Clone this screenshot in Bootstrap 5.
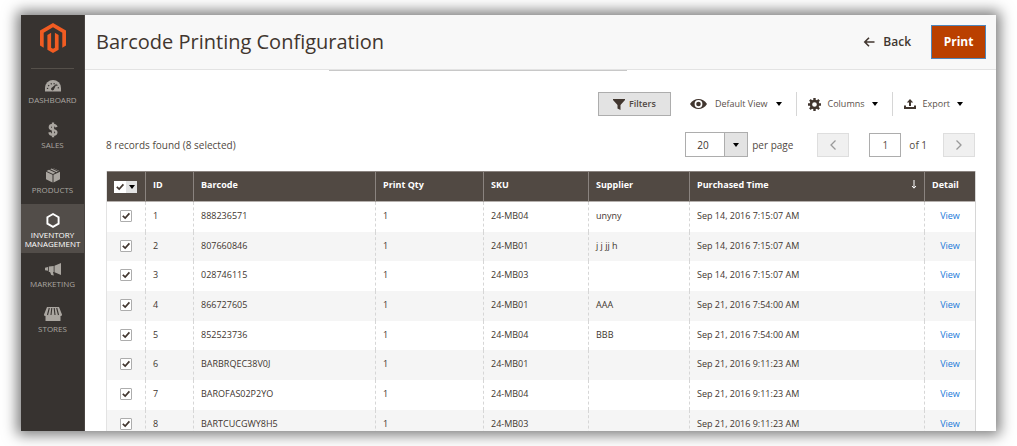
<!DOCTYPE html>
<html lang="en">
<head>
<meta charset="utf-8">
<meta name="viewport" content="width=device-width, initial-scale=1">
<title>Barcode Printing Configuration</title>
<link href="https://cdn.jsdelivr.net/npm/bootstrap@5.3.0/dist/css/bootstrap.min.css" rel="stylesheet">
<style>
body{font-family:"Open Sans",sans-serif;font-size:10px;line-height:16px;color:#514943;background:#fff}
.stage{padding:15px 21px}
.shell{box-shadow:0 0 13px 4px rgba(0,0,0,.52);background:#fff}
.side{width:64px;background:#373330;border-right:1px solid #4a4542}
.logo{padding:8px 0 15px;margin:0 10px;border-bottom:1px solid #55504a}
.side .nav-item a{display:block;height:45px;padding-top:8px;color:#aaa6a0;font-size:8px;line-height:9px;text-transform:uppercase;text-decoration:none;text-align:center}
.side .nav-item svg{display:block;margin:0 auto 2px}
.side .nav-item a.active{height:49px;background:#524d49;color:#fff}
.titlebar{height:55px;background:#f8f8f8;border-bottom:1px solid #e3e3e3;padding:0 10px 0 11px}
.titlebar h1{font-size:20px;line-height:28px;font-weight:400;color:#41362f}
.act{font-size:12px;font-weight:600;border-radius:0;line-height:16px;color:#41362f;border:0}
.act-print{background:#ba4000;color:#fff;border:1px solid #4f86bb;width:55px;height:34px;padding:0;font-weight:700}
.act-print:hover{background:#a83900;color:#fff}
.field-edge{width:298px;margin-left:244px;border-top:1px solid #c8c8c8}
.pane{padding:21px 21px 0}
.tool{background:none;border:0;border-radius:0;height:24px;padding:0 14px 0 11px;gap:7px;font-size:9px;line-height:16px;color:#5a504a}
.tool.view{gap:8px}
.tool:last-child{padding-right:12px}
.tool+.tool{border-left:1px solid #d6d6d6}
.tool.filt{background:#e3e3e3;border:1px solid #adadad;width:73px;padding:0;gap:4px;font-weight:600;color:#514943}
.caret{width:0;height:0;border:3px solid transparent;border-top:4px solid #000;border-bottom:0}
.pager{height:24px;border:1px solid #dedede;background:#f0f0f0;width:32px;border-radius:0;padding:0}
.pagebox{width:32px;height:24px;margin-left:20px;border:1px solid #adadad;border-radius:0;text-align:center;color:#5a504a;font-size:10px;padding:0}
.size{width:63px;height:25px;border:1px solid #adadad;border-radius:0;appearance:none;color:#41362f;padding:0 0 0 11px;font-size:10px;
 background:url("data:image/svg+xml,%3Csvg xmlns='http://www.w3.org/2000/svg' width='23' height='23'%3E%3Cpath fill='%23e3e3e3' d='M0 0h23v23H0z'/%3E%3Cpath fill='%23adadad' d='M0 0h1v23H0z'/%3E%3Cpath d='M9 10h6l-3 4z'/%3E%3C/svg%3E") right center no-repeat #fff}
.grid{table-layout:fixed;border-collapse:separate;border-spacing:0;width:100%;margin-top:14px;border-right:1px solid #d6d6d6;border-left:1px solid #e3e3e3;font-size:9px;line-height:14px}
.grid th{height:31px;background:#514943;color:#fff;font-weight:700;padding:0 7px 3px;border-top:1px solid #8a837f;border-bottom:1px solid #b5b0ad}
.grid th:first-child{padding-bottom:0}
.grid th+th{border-left:1px solid #8a837f}
.grid td{height:30px;padding:0 7px 2px;color:#41362f}
.grid tr:nth-child(3n+2) td{height:29px}
.grid td+td{border-left:1px dashed #d6d6d6}
.grid tbody tr:nth-child(even) td{background:#f5f5f5}
.grid td a{color:#1979d9;text-decoration:none}
.c-check{width:38px}.c-id{width:48px}.c-code{width:182px}.c-qty{width:108px}.c-sku{width:105px}.c-sup{width:101px}.c-time{width:235px}.c-det{width:51px}
.tick{appearance:none;display:block;width:12px;height:12px;margin:0 auto;border:1px solid #adadad;border-radius:1px;
 background:url("data:image/svg+xml,%3Csvg xmlns='http://www.w3.org/2000/svg' viewBox='0 0 10 10'%3E%3Cpath fill='none' stroke='%2341362f' stroke-width='1.7' d='M1.8 4.8l2.4 2.3 4.2-4.7'/%3E%3C/svg%3E") center/10px no-repeat #fff}
th .tick{margin:0;border-color:#fff;border-radius:0}
.more{width:11px;height:12px;background:#e3e3e3;border:0;padding:0}
</style>
</head>
<body>
<div class="stage vh-100 overflow-hidden">
<div class="shell d-flex h-100">
<nav class="side flex-shrink-0" aria-label="Main">
  <div class="logo text-center">
    <svg class="d-block mx-auto" width="26" height="30" viewBox="0 0 26 30" fill="#f15c22"><path d="M13 0l13 7.5v15l-3.7 2.2v-15L13 4.3 3.7 9.7v15L0 22.500v-15z"/><path d="M14.900 24.700L13 25.800l-1.900-1.100v-15l-3.700 2.200v14.900L13 30l5.600-3.200V11.900l-3.700-2.200z"/></svg>
  </div>
  <ul class="nav flex-column flex-nowrap">
    <li class="nav-item"><a href="#"><svg width="18" height="16" viewBox="0 0 18 16"><path fill="currentColor" d="M1 14.500V11a8 8 0 0 1 16 0v3.500z"/><path stroke="#373330" stroke-width="1.300" stroke-dasharray="1.200 1.800" fill="none" d="M3.500 12a5.500 5.500 0 0 1 11 0"/><path fill="#373330" d="M12.800 6.500L10 12.200a1.500 1.500 0 1 1-2-1.700z"/></svg>Dashboard</a></li>
    <li class="nav-item"><a href="#"><svg width="18" height="16" viewBox="0 0 18 16"><path fill="none" stroke="currentColor" stroke-width="2.300" d="M12.500 5.200C12 3.600 10.800 3 9 3 7 3 5.800 3.900 5.800 5.300c0 3.200 6.600 1.700 6.600 5 0 1.600-1.300 2.500-3.400 2.500-2 0-3.300-.8-3.600-2.600M9 .6v14.600"/></svg>Sales</a></li>
    <li class="nav-item"><a href="#"><svg width="18" height="16" viewBox="0 0 18 16" fill="currentColor"><path d="M2 4.800l6.500 3V15.500L2 12.200zM16 4.800l-6.500 3V15.500l6.500-3.300zM2.500 4L5 2.800l6.400 3L9 7zM6.200 2.300L7.500 1.600l6.400 3-1.400.7zM8.700 1.100L9 1l6.500 3-.6.300z"/></svg>Products</a></li>
    <li class="nav-item"><a class="active" href="#"><svg width="18" height="16" viewBox="0 0 18 16"><path fill="none" stroke="currentColor" stroke-width="1.900" d="M9 2l5.600 3.200v6.400L9 14.800l-5.600-3.200V5.200z"/></svg>Inventory Management</a></li>
    <li class="nav-item"><a href="#"><svg width="18" height="16" viewBox="0 0 18 16" fill="currentColor"><path d="M17 2v12l-6.500-2.800V4.800zM9.700 5v6H9l.8 3.600-2.500-.5L6 11H4.800V5.500zM1 6.800L4 6v3.800L1 9.200z"/></svg>Marketing</a></li>
    <li class="nav-item"><a href="#"><svg width="18" height="16" viewBox="0 0 18 16"><path fill="currentColor" d="M3 1h12l3 7.500c0 1-.7 1.500-1.500 1.500v5h-15v-5C.7 10 0 9.500 0 8.500z"/><path stroke="#373330" stroke-width="1.100" fill="none" d="M5.300 2L3.500 9M7.800 2L7 9M10.200 2l.8 7M12.700 2l1.800 7"/></svg>Stores</a></li>
  </ul>
</nav>
<main class="flex-grow-1 overflow-hidden">
  <header class="titlebar d-flex align-items-center justify-content-between">
    <h1 class="m-0">Barcode Printing Configuration</h1>
    <div class="d-flex align-items-center">
      <button type="button" class="btn act d-flex align-items-center gap-2 p-0 me-3"><svg width="12" height="12" viewBox="0 0 12 12" fill="none" stroke="currentColor" stroke-width="1.600"><path d="M11.500 6H2M6 1.800L1.800 6 6 10.200"/></svg>Back</button>
      <button type="button" class="btn act act-print ms-1">Print</button>
    </div>
  </header>
  <div class="field-edge"></div>
  <div class="pane">
    <div class="d-flex justify-content-end">
      <button type="button" class="btn tool filt d-flex align-items-center justify-content-center me-2"><svg width="12" height="11" viewBox="0 0 12 11" fill="#41362f"><path d="M0 0h12v1L7.500 6v5l-3-1.500V6L0 1z"/></svg>Filters</button>
      <button type="button" class="btn tool view border-0 d-flex align-items-center"><svg width="17" height="12" viewBox="0 0 17 12"><path fill="#41362f" fill-rule="evenodd" d="M0 6C4-.8 13-.8 17 6 13 12.800 4 12.800 0 6zm8.500-3.900a3.900 3.900 0 1 0 0 7.800 3.900 3.900 0 0 0 0-7.800z"/><circle cx="8.500" cy="6" r="2.300" fill="#41362f"/></svg>Default View<span class="caret"></span></button>
      <button type="button" class="btn tool d-flex align-items-center"><svg width="13" height="13" viewBox="0 0 13 13" fill="none" stroke="#41362f"><circle cx="6.500" cy="6.500" r="3.600" stroke-width="2.500"/><path stroke-width="2.400" d="M6.500 0v2.500M6.500 10.500V13M0 6.500h2.500M10.500 6.500H13M1.900 1.900l1.800 1.800M9.300 9.300l1.800 1.800M1.900 11.100l1.800-1.800M9.300 3.700l1.800-1.800"/></svg>Columns<span class="caret"></span></button>
      <button type="button" class="btn tool d-flex align-items-center"><svg width="12" height="12" viewBox="0 0 12 12" fill="#41362f"><path d="M6 1l3.200 3.500H7V8H5V4.500H2.800zM0 7.500h2V9h8V7.500h2V11H0z"/></svg>Export<span class="caret"></span></button>
    </div>
    <div class="d-flex align-items-center mt-3">
      <span class="me-auto">8 records found (8 selected)</span>
      <select class="size" id="per"><option>20</option></select>
      <label class="ms-1" for="per">per page</label>
      <button type="button" class="btn pager d-flex align-items-center justify-content-center ms-4" aria-label="Previous page"><svg width="8" height="10" viewBox="0 0 8 10" fill="none" stroke="#999" stroke-width="1.300"><path d="M6.500.5L2 5l4.500 4.500"/></svg></button>
      <input class="pagebox" id="page" value="1" aria-label="Page">
      <label class="ms-2" for="page">of 1</label>
      <button type="button" class="btn pager d-flex align-items-center justify-content-center ms-3" aria-label="Next page"><svg width="8" height="10" viewBox="0 0 8 10" fill="none" stroke="#999" stroke-width="1.300"><path d="M1.500.5L6 5 1.500 9.500"/></svg></button>
    </div>
    <table class="grid">
      <colgroup><col class="c-check"><col class="c-id"><col class="c-code"><col class="c-qty"><col class="c-sku"><col class="c-sup"><col class="c-time"><col class="c-det"></colgroup>
      <thead><tr><th><div class="d-flex"><input type="checkbox" class="tick" checked aria-label="Select all"><button type="button" class="more d-flex align-items-center justify-content-center" aria-label="Selection options"><span class="caret"></span></button></div></th><th>ID</th><th>Barcode</th><th>Print Qty</th><th>SKU</th><th>Supplier</th><th><div class="d-flex justify-content-between">Purchased Time<svg width="6" height="12" viewBox="0 0 6 12" fill="none" stroke="#fff"><path d="M3 2v8M1 8l2 2.200L5 8"/></svg></div></th><th>Detail</th></tr></thead>
      <tbody>
        <tr><td><input type="checkbox" class="tick" checked aria-label="Row 1"></td><td>1</td><td>888236571</td><td>1</td><td>24-MB04</td><td>unyny</td><td>Sep 14, 2016 7:15:07 AM</td><td class="text-center"><a href="#">View</a></td></tr>
        <tr><td><input type="checkbox" class="tick" checked aria-label="Row 2"></td><td>2</td><td>807660846</td><td>1</td><td>24-MB01</td><td>j j jj h</td><td>Sep 14, 2016 7:15:07 AM</td><td class="text-center"><a href="#">View</a></td></tr>
        <tr><td><input type="checkbox" class="tick" checked aria-label="Row 3"></td><td>3</td><td>028746115</td><td>1</td><td>24-MB03</td><td></td><td>Sep 14, 2016 7:15:07 AM</td><td class="text-center"><a href="#">View</a></td></tr>
        <tr><td><input type="checkbox" class="tick" checked aria-label="Row 4"></td><td>4</td><td>866727605</td><td>1</td><td>24-MB01</td><td>AAA</td><td>Sep 21, 2016 7:54:00 AM</td><td class="text-center"><a href="#">View</a></td></tr>
        <tr><td><input type="checkbox" class="tick" checked aria-label="Row 5"></td><td>5</td><td>852523736</td><td>1</td><td>24-MB04</td><td>BBB</td><td>Sep 21, 2016 7:54:00 AM</td><td class="text-center"><a href="#">View</a></td></tr>
        <tr><td><input type="checkbox" class="tick" checked aria-label="Row 6"></td><td>6</td><td>BARBRQEC38V0J</td><td>1</td><td>24-MB01</td><td></td><td>Sep 21, 2016 9:11:23 AM</td><td class="text-center"><a href="#">View</a></td></tr>
        <tr><td><input type="checkbox" class="tick" checked aria-label="Row 7"></td><td>7</td><td>BAROFAS02P2YO</td><td>1</td><td>24-MB04</td><td></td><td>Sep 21, 2016 9:11:23 AM</td><td class="text-center"><a href="#">View</a></td></tr>
        <tr><td><input type="checkbox" class="tick" checked aria-label="Row 8"></td><td>8</td><td>BARTCUCGWY8H5</td><td>1</td><td>24-MB03</td><td></td><td>Sep 21, 2016 9:11:23 AM</td><td class="text-center"><a href="#">View</a></td></tr>
      </tbody>
    </table>
  </div>
</main>
</div>
</div>
<script src="https://cdn.jsdelivr.net/npm/bootstrap@5.3.0/dist/js/bootstrap.bundle.min.js"></script>
</body>
</html>
